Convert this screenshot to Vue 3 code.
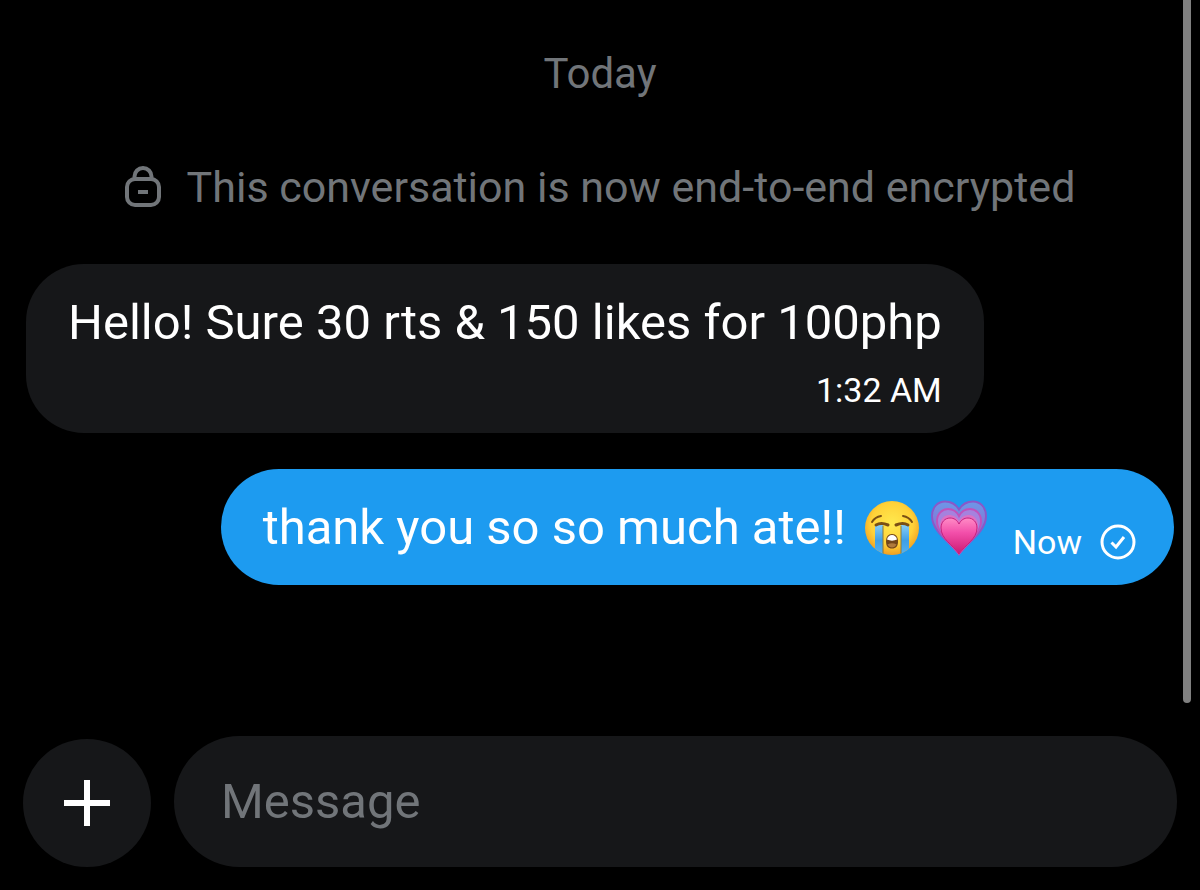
<template>
  <div class="chat">
    <main class="thread">
      <div class="day">Today</div>
      <div class="notice">
        <svg class="notice-icon" viewBox="0 0 36 42" aria-hidden="true">
          <path d="M9.5 13V10.5a8.5 8.5 0 0 1 17 0V13" />
          <rect x="2" y="13" width="32" height="26" rx="8" />
          <path d="M13 26h10" />
        </svg>
        <span>This conversation is now end-to-end encrypted</span>
      </div>

      <div
        v-for="msg in messages"
        :key="msg.id"
        class="bubble"
        :class="msg.mine ? 'sent' : 'received'"
      >
        <div class="text">
          <span>{{ msg.text }}</span>
          <span v-if="msg.mine" class="emojis">
            <svg class="emoji" viewBox="0 0 56 56" role="img" aria-label="Loudly crying face">
              <defs>
                <radialGradient id="face" cx="50%" cy="42%" r="60%">
                  <stop offset="0" stop-color="#ffe94e" />
                  <stop offset="0.65" stop-color="#ffd138" />
                  <stop offset="1" stop-color="#ef9a20" />
                </radialGradient>
                <linearGradient id="tear" x1="0" y1="0" x2="0" y2="1">
                  <stop offset="0" stop-color="#86cdf6" />
                  <stop offset="0.5" stop-color="#3f9fe6" />
                  <stop offset="1" stop-color="#55b4f4" />
                </linearGradient>
                <clipPath id="head"><circle cx="28" cy="28" r="27" /></clipPath>
              </defs>
              <circle cx="28" cy="28" r="27" fill="url(#face)" />
              <g clip-path="url(#head)">
                <path d="M11 25h8v31h-8zM37 25h8v31h-8z" fill="url(#tear)" />
                <path d="M19 26v30M37 26v30" stroke="#8a7a3c" stroke-width="1" />
              </g>
              <path d="M8 22Q11 17 17 16M48 22Q45 17 39 16" class="brow" />
              <path d="M12 25q5-3 12 0M44 25q-5-3-12 0" class="lid" />
              <path d="M28 34c4 0 6 3 6 7.500s-2 7-6 7-6-2.500-6-7 2-7.500 6-7.500z" fill="#73461a" />
              <path d="M23 39.500c.6-3 2.500-4.500 5-4.500s4.400 1.500 5 4.500c-3 1.500-7 1.500-10 0z" fill="#fff" />
              <path d="M23.5 44.500q4.500-2.500 9 0-1.500 3-4.500 3t-4.500-3z" fill="#b07a3c" />
            </svg>
            <svg class="emoji" viewBox="0 0 56 56" role="img" aria-label="Growing heart">
              <defs>
                <linearGradient id="heart" x1="0" y1="0" x2="0" y2="1">
                  <stop offset="0" stop-color="#ff8cc6" />
                  <stop offset="0.4" stop-color="#f350ab" />
                  <stop offset="1" stop-color="#cc1a72" />
                </linearGradient>
                <linearGradient id="outer" x1="0" y1="0" x2="0" y2="1">
                  <stop offset="0" stop-color="#6c98e8" />
                  <stop offset="1" stop-color="#a04fbe" />
                </linearGradient>
              </defs>
              <path d="M28 54C20 43 1 32 1 16 1 7 7 1.500 14 1.500c7 0 11 3 14 8 3-5 7-8 14-8 7 0 13 5.500 13 14.500 0 16-19 27-27 38z" fill="url(#outer)" stroke="#8a58c8" stroke-width="2" />
              <path d="M28 54C20 43 6 34 6 21c0-7 5-12 11-12 5 0 9 3 11 7 2-4 6-7 11-7 6 0 11 5 11 12 0 13-14 22-22 33z" fill="#a582de" stroke="#c052bc" stroke-width="2" />
              <path d="M28 54C21 44 9 37 9 26c0-7 4-11 9-11 4 0 8 2 10 6 2-4 6-6 10-6 5 0 9 4 9 11 0 11-12 18-19 28z" fill="#dc70c4" />
              <path d="M28 54C22 45 10 39 10 28c0-6 4-10 9-10 4 0 7 2 9 6 2-4 5-6 9-6 5 0 9 4 9 10 0 11-12 17-18 26z" fill="url(#heart)" stroke="#c8207c" stroke-width="1" />
            </svg>
          </span>
        </div>
        <div class="meta">
          <time>{{ msg.time }}</time>
          <svg v-if="msg.mine" class="check" viewBox="0 0 36 36" role="img" aria-label="Sent">
            <circle cx="18" cy="18" r="16" />
            <path d="M11.5 18.500l4.500 4.500 8-10" />
          </svg>
        </div>
      </div>
    </main>

    <form class="composer" @submit.prevent="send">
      <button type="button" class="add-btn" aria-label="Add attachment">
        <svg viewBox="0 0 48 48" aria-hidden="true">
          <path d="M24 1v46M1 24h46" />
        </svg>
      </button>
      <input v-model="draft" class="field" type="text" placeholder="Message" aria-label="Message" />
    </form>

    <div class="scroll-thumb"></div>
  </div>
</template>

<script setup>
import { ref } from 'vue'

const draft = ref('')

const messages = ref([
  { id: 1, text: 'Hello! Sure 30 rts & 150 likes for 100php', time: '1:32 AM', mine: false },
  { id: 2, text: 'thank you so so much ate!!', time: 'Now', mine: true },
])

const send = () => {
  draft.value = ''
}
</script>

<style>
body {
  margin: 0;
  background: #000;
}
</style>

<style scoped>
.chat {
  position: relative;
  box-sizing: border-box;
  min-height: 100vh;
  display: flex;
  flex-direction: column;
  background: #000;
  font-family: Roboto, sans-serif;
  color: #fff;
}

.thread {
  flex: 1;
  display: flex;
  flex-direction: column;
  padding: 50px 26px 36px;
}

.day,
.notice {
  font-size: 42px;
  line-height: 48px;
  color: #717579;
  text-align: center;
}

.notice {
  display: flex;
  justify-content: center;
  align-items: center;
  gap: 26px;
  margin: 65px 0 53px;
  font-size: 43px;
}

.notice-icon {
  width: 36px;
  height: 42px;
  fill: none;
  stroke: #717579;
  stroke-width: 4;
}

.bubble {
  padding: 27px 42px 25px;
  border-radius: 58px;
}

.received {
  align-self: flex-start;
  padding-bottom: 23px;
  background: #161719;
}

.sent {
  align-self: flex-end;
  display: flex;
  align-items: flex-end;
  gap: 26px;
  margin-top: 36px;
  padding-right: 38px;
  background: #1d9bf0;
}

.text {
  display: flex;
  align-items: center;
  gap: 18px;
  font-size: 49px;
  line-height: 64px;
}

.emojis {
  display: flex;
  gap: 11px;
}

.emoji {
  width: 56px;
  height: 56px;
}

.brow,
.lid {
  fill: none;
  stroke: #7a4f14;
  stroke-width: 2;
  stroke-linecap: round;
}

.lid {
  stroke-width: 3;
}

.meta {
  display: flex;
  justify-content: flex-end;
  align-items: center;
  gap: 18px;
  font-size: 34px;
  line-height: 40px;
}

.received .meta {
  margin-top: 15px;
}

.sent .meta {
  line-height: 36px;
}

.check {
  width: 36px;
  height: 36px;
  fill: none;
  stroke: #fff;
  stroke-width: 3;
}

.composer {
  display: flex;
  align-items: flex-end;
  gap: 23px;
  padding: 0 23px 23px;
}

.add-btn {
  flex: none;
  display: grid;
  place-items: center;
  width: 128px;
  height: 128px;
  padding: 0;
  border: none;
  border-radius: 50%;
  background: #161719;
  cursor: pointer;
}

.add-btn svg {
  width: 48px;
  height: 48px;
  stroke: #fff;
  stroke-width: 6;
}

.field {
  flex: 1;
  min-width: 0;
  box-sizing: border-box;
  height: 131px;
  padding: 0 47px;
  border: none;
  border-radius: 66px;
  outline: none;
  background: #161719;
  color: #fff;
  font: inherit;
  font-size: 49px;
}

.field::placeholder {
  color: #717579;
  opacity: 1;
}

.scroll-thumb {
  position: absolute;
  top: 0;
  right: 9px;
  width: 8px;
  height: 79%;
  border-radius: 0 0 4px 4px;
  background: #808080;
}
</style>
